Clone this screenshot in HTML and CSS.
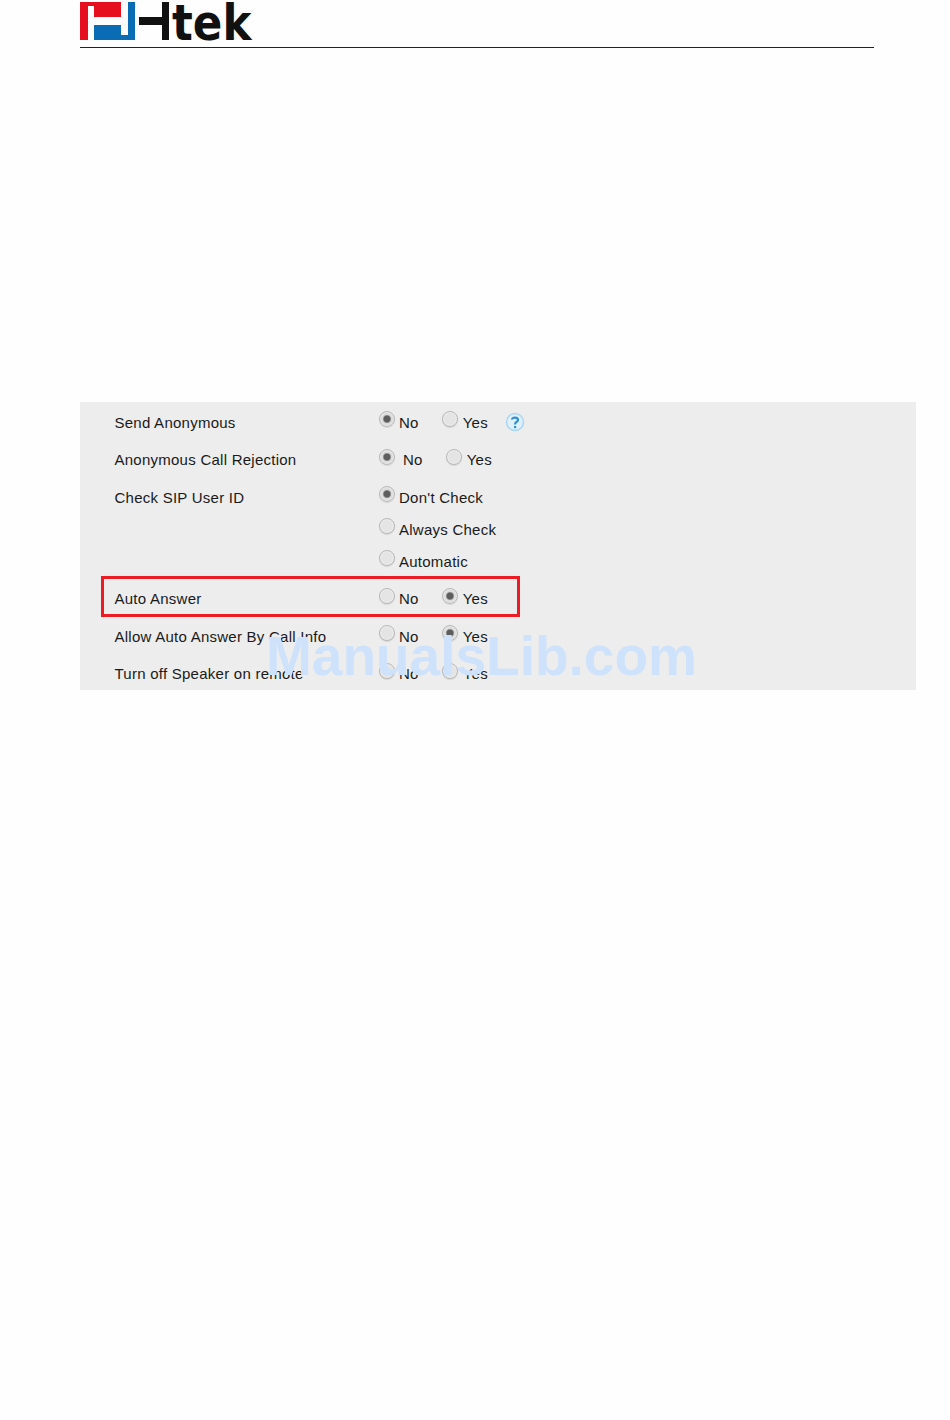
FILE: index.html
```html
<!DOCTYPE html>
<html lang="en">
<head>
    <meta charset="UTF-8">
    <meta name="viewport" content="width=device-width, initial-scale=1.0">
    <title>Auto Answer - Htek</title>
    <link rel="stylesheet" href="styles.css">
</head>
<body>
    <div class="manual-page">
        <div class="page-header">
            <svg class="logo-mark" width="90" height="41" viewBox="0 0 90 41">
                <path fill="#e60f1e" d="M0 2H41V17H14V6H8V40H0Z"/>
                <path fill="#0a6cb4" d="M48 2H55V40H14V25H41V35H48Z"/>
                <path fill="#111" d="M59 17H82V2H89V40H82V25H59Z"/>
            </svg>
            <span class="logo-text">tek</span>
        </div>

        <div class="settings-shot">
            <div class="row">
                <div class="row-label">Send Anonymous</div>
                <div class="row-options">
                    <span class="radio checked"></span><span class="opt-no">No</span>
                    <span class="radio radio-second"></span><span class="opt-yes">Yes</span>
                    <svg class="help-icon" width="20" height="20" viewBox="0 0 20 20">
                        <circle cx="10" cy="10" r="8.5" fill="#dff0fa" stroke="#a9d6f0" stroke-width="1.5"/>
                        <path d="M7 7.5C7 5 13 5 13 8C13 10 10 10 10 12.5" fill="none" stroke="#2f8fce" stroke-width="2.2"/>
                        <rect x="9" y="14" width="2.2" height="2.2" fill="#2f8fce"/>
                    </svg>
                </div>
            </div>
            <div class="row">
                <div class="row-label">Anonymous Call Rejection</div>
                <div class="row-options">
                    <span class="radio checked"></span><span class="opt-no wide">No</span>
                    <span class="radio radio-second"></span><span class="opt-yes">Yes</span>
                </div>
            </div>
            <div class="row">
                <div class="row-label">Check SIP User ID</div>
                <div class="row-options">
                    <span class="radio checked"></span><span class="opt-no">Don't Check</span>
                </div>
            </div>
            <div class="row row-sub row-sub-first">
                <div class="row-label"></div>
                <div class="row-options">
                    <span class="radio"></span><span class="opt-no">Always Check</span>
                </div>
            </div>
            <div class="row row-sub row-sub-last">
                <div class="row-label"></div>
                <div class="row-options">
                    <span class="radio"></span><span class="opt-no">Automatic</span>
                </div>
            </div>
            <div class="row">
                <div class="row-label">Auto Answer</div>
                <div class="row-options">
                    <span class="radio"></span><span class="opt-no">No</span>
                    <span class="radio radio-second checked"></span><span class="opt-yes">Yes</span>
                </div>
            </div>
            <div class="row">
                <div class="row-label">Allow Auto Answer By Call Info</div>
                <div class="row-options">
                    <span class="radio"></span><span class="opt-no">No</span>
                    <span class="radio radio-second checked"></span><span class="opt-yes">Yes</span>
                </div>
            </div>
            <div class="row">
                <div class="row-label">Turn off Speaker on remote</div>
                <div class="row-options">
                    <span class="radio"></span><span class="opt-no">No</span>
                    <span class="radio radio-second"></span><span class="opt-yes">Yes</span>
                </div>
            </div>

            <div class="highlight-box"></div>
            <div class="watermark">ManualsLib.com</div>
        </div>
    </div>
</body>
</html>
```

FILE: styles.css
```css
body {
    margin: 0;
    background-color: #fefefe;
    font-family: "Liberation Sans", Arial, sans-serif;
}

.manual-page {
    height: 1420px;
    padding-left: 80px;
    overflow: hidden;
}

.page-header {
    display: flex;
    align-items: flex-start;
    width: 794px;
    height: 47px;
    border-bottom: 1.5px solid #222;
}

.logo-mark {
    flex-shrink: 0;
}

.logo-text {
    margin-left: 2px;
    font-family: "DejaVu Sans", sans-serif;
    font-weight: 700;
    font-size: 49px;
    line-height: 48px;
    color: #111;
    transform: scaleX(0.89);
    transform-origin: left center;
}

.settings-shot {
    position: relative;
    width: 836px;
    height: 288px;
    margin-top: 354px;
    padding-top: 1.5px;
    box-sizing: border-box;
    background-color: #ededed;
    overflow: hidden;
}

.row {
    display: flex;
    align-items: center;
    height: 37.5px;
    font-size: 15px;
    letter-spacing: 0.25px;
    color: #1a1a1a;
}

.row-sub {
    height: 32px;
}

.row-sub-first {
    margin-top: -2.75px;
}

.row-sub-last {
    margin-bottom: 2.75px;
}

.row-label {
    width: 299px;
    padding-left: 34.5px;
    box-sizing: border-box;
}

.row-options {
    display: flex;
    align-items: center;
}

.radio {
    width: 16px;
    height: 16px;
    margin-top: -6px;
    border: 1px solid #b8b8b8;
    border-radius: 50%;
    background-color: #e4e4e4;
    box-shadow: inset 0 0 2px #fff, 0 1px 1px #d8d8d8;
    box-sizing: border-box;
}

.radio.checked {
    background: radial-gradient(circle, #5e5e5e 0, #5e5e5e 3px, #dcdcdc 4.5px);
}

.radio-second {
    margin-left: 23px;
}

.opt-no {
    margin-left: 4px;
}

.opt-no.wide {
    margin-left: 8px;
}

.opt-yes {
    margin-left: 5px;
}

.help-icon {
    margin-left: 17px;
}

.highlight-box {
    position: absolute;
    left: 21px;
    top: 174px;
    width: 419px;
    height: 41px;
    border: 3px solid #ed1c24;
    box-sizing: border-box;
}

.watermark {
    position: absolute;
    left: 186px;
    top: 224px;
    font-weight: 700;
    font-size: 55px;
    line-height: 60px;
    white-space: nowrap;
    color: #cfe2fb;
}
```
